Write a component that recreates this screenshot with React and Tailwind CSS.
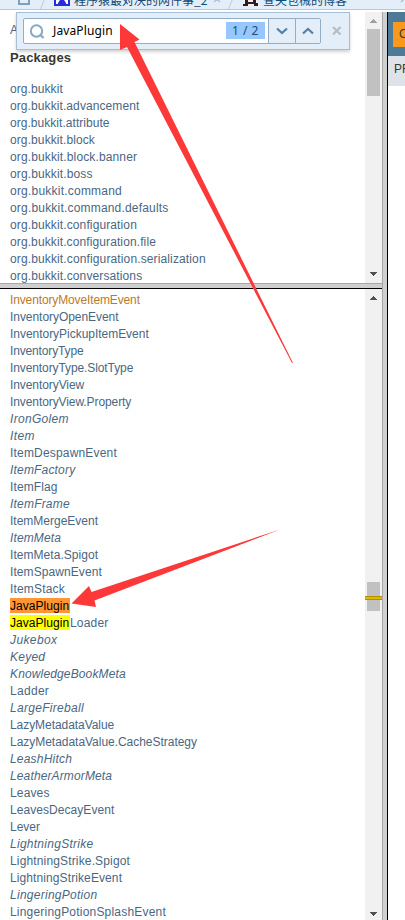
// Each entry is a name and its letter spacing in pixels.
const packages = [
  ['org.bukkit', 0.08], ['org.bukkit.advancement', 0.09], ['org.bukkit.attribute', 0.04], ['org.bukkit.block', 0.1],
  ['org.bukkit.block.banner', 0.13], ['org.bukkit.boss', 0.12], ['org.bukkit.command', 0.22],
  ['org.bukkit.command.defaults', 0.19], ['org.bukkit.configuration', 0.12],
  ['org.bukkit.configuration.file', 0.11], ['org.bukkit.configuration.serialization', 0.13],
  ['org.bukkit.conversations', 0.12],
];

// Names that start with "*" are interfaces and are set in italics.
const classes = [
  ['InventoryMoveItemEvent', -0.13], ['InventoryOpenEvent', -0.05], ['InventoryPickupItemEvent', -0.03],
  ['InventoryType', -0.15], ['InventoryType.SlotType', -0.1], ['InventoryView', -0.08],
  ['InventoryView.Property', -0.09], ['*IronGolem', 0.3], ['*Item', 0.4], ['ItemDespawnEvent', 0.18],
  ['*ItemFactory', 0.18], ['ItemFlag', 0.12], ['*ItemFrame', 0.2], ['ItemMergeEvent', 0],
  ['*ItemMeta', 0.12], ['ItemMeta.Spigot', 0.05], ['ItemSpawnEvent', 0.08], ['ItemStack', 0.16],
  ['JavaPlugin', 0.05], ['JavaPluginLoader', 0.2], ['*Jukebox', 0.4], ['*Keyed', 0.25],
  ['*KnowledgeBookMeta', 0.14], ['Ladder', 0.3], ['*LargeFireball', 0.3], ['LazyMetadataValue', -0.06],
  ['LazyMetadataValue.CacheStrategy', -0.03], ['*LeashHitch', 0.2], ['*LeatherArmorMeta', 0.13],
  ['Leaves', 0.15], ['LeavesDecayEvent', 0.06], ['Lever', 0], ['*LightningStrike', 0.27],
  ['LightningStrike.Spigot', 0.15], ['LightningStrikeEvent', 0.1], ['*LingeringPotion', 0.27],
  ['LingeringPotionSplashEvent', 0.2],
];

function ClassRow({ name, spacing }) {
  const italic = name.startsWith('*');
  const style = { letterSpacing: spacing + 'px' };
  if (name.startsWith('JavaPlugin')) {
    const active = name === 'JavaPlugin';
    return (
      <li className="flex h-[17px] items-start">
        <span className={'h-[15px] w-[60px] leading-[17px] tracking-[0.050px] text-black ' + (active ? 'bg-[#ff9632]' : 'bg-[#ffff00]')}>
          JavaPlugin
        </span>
        <span style={style}>{name.slice(10)}</span>
      </li>
    );
  }
  return (
    <li style={style} className={'h-[17px] ' + (italic ? 'italic' : name === 'InventoryMoveItemEvent' ? 'text-[#bb7a2a]' : '')}>
      {italic ? name.slice(1) : name}
    </li>
  );
}

function ScrollArrow({ down, light }) {
  return (
    <svg width="7" height="4" viewBox="0 0 7 4" shapeRendering="crispEdges" className="shrink-0">
      <path d={down ? 'M0 0h7v1H6v1H5v1H4v1H3V3H2V2H1V1H0z' : 'M3 0h1v1h1v1h1v1h1v1H0V3h1V2h1V1h1z'} fill={light ? '#a0a0a0' : '#505050'} />
    </svg>
  );
}

function TabStrip() {
  return (
    <div className="relative h-[10px] shrink-0 overflow-hidden border-b border-[#b5cbdc] bg-[#e4eef8]">
      <svg width="405" height="9" className="absolute left-0 top-0">
        <path d="M19 -1v5h10v-5" fill="none" stroke="#7e9fc2" strokeWidth="2" />
        <path d="M45 -2 L40.500 9M233 -2 L228.500 9" stroke="#b8cee0" strokeWidth="1" />
        <path d="M54 -1h16v7H54z" fill="#2a2ae0" />
        <path d="M56 -1h12v5H56z" fill="#fff" />
        <path d="M58 3l2-3h4l2 3v1h-8z" fill="#2a2ae0" />
        <path d="M214 2l6-6M220 2l-6-6M401 2l6-6" stroke="#b0c3d6" strokeWidth="1.500" />
        <path d="M243 0h14v6H243z" fill="#f5eeee" />
        <path d="M245 0h3v2h5V0h3v3h2v3h-4V4h-6v2h-5V4h2z" fill="#321b20" />
      </svg>
      <span className="absolute left-[74px] top-[-8px] h-[17px] w-[134px] overflow-hidden whitespace-nowrap font-['Noto_Sans_CJK_SC',sans-serif] text-[12px] leading-[15px] text-[#164870]">程序猿最对决的网件事_2</span>
      <span className="absolute left-[263px] top-[-8px] whitespace-nowrap font-['Noto_Sans_CJK_SC',sans-serif] text-[12px] leading-[15px] text-[#164870]">查夫包械的博客</span>
    </div>
  );
}

function FindBar() {
  return (
    <div className="absolute left-[16px] top-[12px] flex h-[38px] w-[334px] border border-[#a5bfd6] bg-[#e4eef8] pl-[6px] pt-[5px] shadow-[0_2px_3px_rgba(0,0,0,0.18)]">
      <div className="flex h-[26px] w-[298px] rounded-[2px] border border-[#93afc8] bg-white">
        <svg width="28" height="24" className="shrink-0">
          <circle cx="12.500" cy="12" r="5.700" fill="none" stroke="#86a8c9" strokeWidth="2" />
          <path d="M16.500 16l3 3" stroke="#86a8c9" strokeWidth="2.300" />
        </svg>
        <span className="w-[174px] pl-[1px] font-['Noto_Sans',sans-serif] text-[12px] leading-[23px] tracking-[0.120px] text-black">JavaPlugin</span>
        <span className="mt-[3px] h-[17px] w-[39px] bg-[#96c8fd] text-center font-['Noto_Sans',sans-serif] text-[12px] leading-[17px] tracking-[0.500px] text-[#264a70]">1 / 2</span>
        <div className="ml-[3px] flex w-[27px] items-center justify-center border-l border-[#93afc8] bg-[#e4eef8]">
          <svg width="12" height="8"><path d="M1 1.500l5 4.500 5-4.500" fill="none" stroke="#5580a6" strokeWidth="2.200" /></svg>
        </div>
        <div className="flex flex-1 items-center justify-center border-l border-[#93afc8] bg-[#e4eef8]">
          <svg width="12" height="8"><path d="M1 6.500l5-4.500 5 4.500" fill="none" stroke="#5580a6" strokeWidth="2.200" /></svg>
        </div>
      </div>
      <svg width="10" height="10" className="ml-[11px] mt-[8px]"><path d="M1 1l7.500 7.500M8.500 1L1 8.500" stroke="#b9bcc0" strokeWidth="2.200" /></svg>
    </div>
  );
}

export default function App() {
  return (
    <div className="relative flex h-[920px] w-[405px] flex-col overflow-hidden bg-white font-['Liberation_Sans',Arial,sans-serif] text-[12px] leading-[17px] text-[#4a6782]">
      <TabStrip />
      <div className="flex min-h-0 flex-1 pt-[2px]">
        <div className="flex w-[382px] flex-col">
          <div className="flex h-[271px] shrink-0">
            <div className="flex-1 overflow-hidden pl-[10px] pt-[10px]">
              <div>All Classes</div>
              <h2 className="mt-[10px] text-[13px] font-bold leading-[17px] tracking-[0.150px] text-[#353833]">Packages</h2>
              <ul className="mt-[15px]">
                {packages.map(([name, spacing]) => (
                  <li key={name} className="h-[17px]" style={{ letterSpacing: spacing + 'px' }}>{name}</li>
                ))}
              </ul>
            </div>
            <div className="flex w-[17px] flex-col items-center justify-between bg-[#f1f1f1] pb-[7px] pt-[7px]">
              <ScrollArrow light />
              <div className="mb-auto mt-[6px] h-[67px] w-[13px] shrink-0 bg-[#c1c1c1]" />
              <ScrollArrow down />
            </div>
          </div>
          <div className="h-[6px] shrink-0 border-b border-t border-b-black border-t-[#a8a8a8] bg-[#cfcfcf]" />
          <div className="flex min-h-0 flex-1">
            <ul className="flex-1 overflow-hidden pl-[10px] pt-[3px]">
              {classes.map(([name, spacing]) => <ClassRow key={name} name={name} spacing={spacing} />)}
            </ul>
            <div className="flex w-[17px] flex-col items-center bg-[#f1f1f1] pb-[4px] pt-[7px]">
              <ScrollArrow />
              <div className="mt-[282px] flex h-[29px] w-[17px] shrink-0 justify-center">
                <div className="relative w-[13px] bg-[#c1c1c1]">
                  <div className="absolute left-[-2px] top-[14px] h-[4px] w-[17px] border-y border-[#b09000] bg-[#dfb700]" />
                </div>
              </div>
              <div className="flex-1" />
              <ScrollArrow down />
            </div>
          </div>
        </div>
        <div className="w-[6px] border-l border-r border-l-[#a8a8a8] border-r-black bg-[#cfcfcf]" />
        <div className="flex-1 overflow-hidden text-[#353833]">
          <div className="h-[44px] bg-[#4d7a97] pl-[5px] pt-[10px]">
            <div className="h-[25px] overflow-hidden bg-[#f8981d] pl-[6px] leading-[25px]">OVERVIEW</div>
          </div>
          <div className="h-[30px] bg-[#dee3e9] pl-[6px] leading-[26px]">PREV</div>
        </div>
      </div>
      <FindBar />
      <svg width="405" height="920" className="pointer-events-none absolute left-0 top-0">
        <path d="M120 24L139.500 39.500L134.500 42L293 363L292 363L127 47L120 50z" fill="#fc3838" />
        <path d="M71.500 603.500L89 586L91.500 592L280 529.500L94.500 600.500L96 607z" fill="#fc3838" />
      </svg>
    </div>
  );
}
